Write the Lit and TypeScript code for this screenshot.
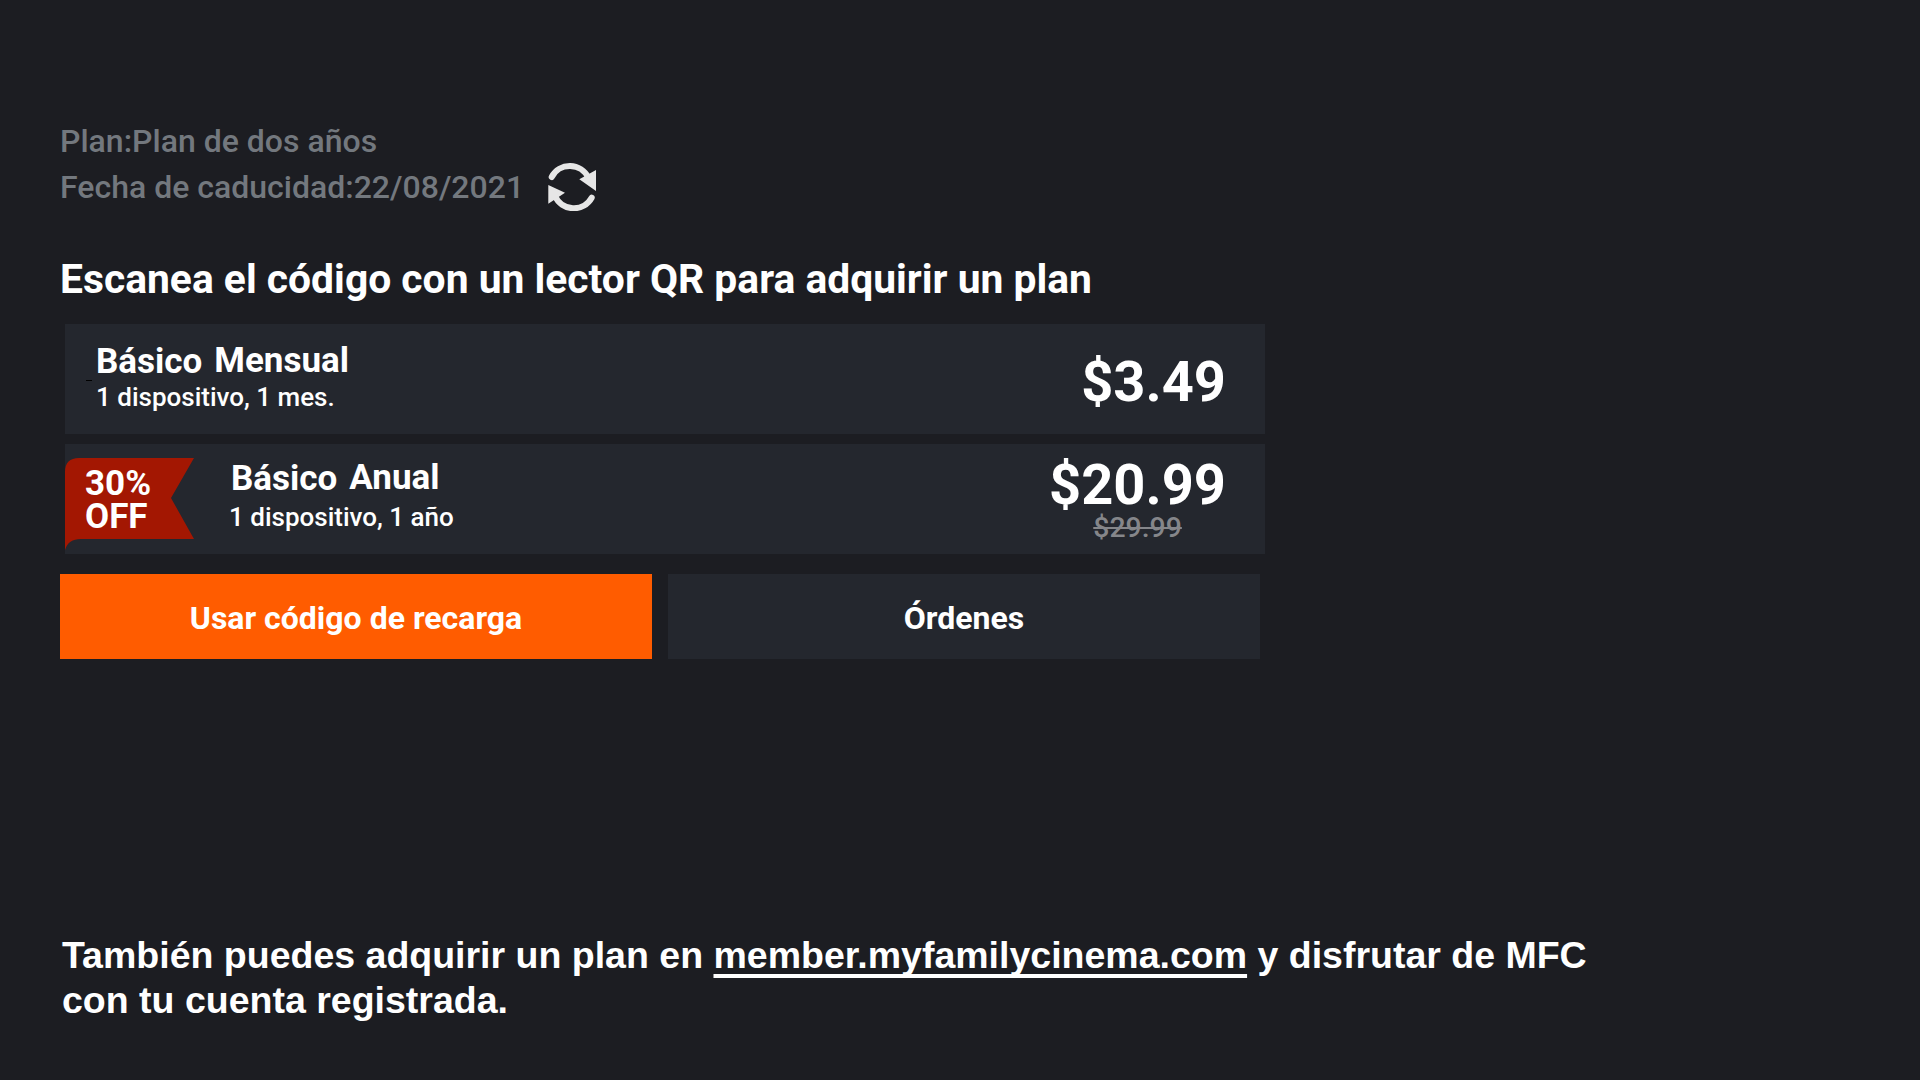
import { LitElement, html, css } from "lit";
import { customElement } from "lit/decorators.js";

@customElement("app-root")
export class AppRoot extends LitElement {
  static styles = css`
    :host { display: flex; flex-direction: column; width: 1920px; height: 1080px; background: #1c1d22; font-family: Roboto, sans-serif; color: #fff; overflow: hidden; box-sizing: border-box; padding: 118px 0 0 60px; }
    .meta { font-size: 32px; font-weight: 500; color: #73787e; line-height: 46px; }
    .expiry { display: flex; align-items: center; height: 46px; }
    .expiry svg { margin: 0 0 3px 23px; display: block; flex: none; }
    h1 { margin: 41px 0 0; font-size: 40.8px; font-weight: 700; line-height: 56px; }
    .rows { display: flex; flex-direction: column; gap: 10px; margin: 17px 0 0 5px; width: 1200px; }
    .row { position: relative; height: 110px; background: #24272e; display: flex; align-items: center; justify-content: space-between; padding: 0 39px 0 31px; box-sizing: border-box; }
    .row.deal { padding-left: 166px; }
    .info { display: flex; flex-direction: column; margin-bottom: 5px; }
    .deal .info { margin-bottom: 8px; }
    .name { display: flex; gap: 12px; font-size: 35px; font-weight: 700; line-height: 42px; margin-bottom: -1px; }
    .deal .name { margin-bottom: 2px; }
    .name .b { position: relative; top: 1px; }
    .sub { font-size: 26px; font-weight: 500; line-height: 32px; }
    .deal .sub { margin-left: -2px; }
    .price { display: flex; flex-direction: column; align-items: center; margin-top: 5px; }
    .deal .price { margin: 0 0 9px; }
    .now { font-size: 56px; font-weight: 700; line-height: 66px; }
    .was { font-size: 28.4px; font-weight: 500; line-height: 20px; color: #85868a; text-decoration: line-through; height: 20px; }
    .ribbon { position: absolute; left: 0; top: 14px; width: 130px; height: 92px; display: block; }
    .off { position: absolute; left: 20px; top: 23px; font-size: 35px; font-weight: 700; line-height: 33px; }
    .dash { position: absolute; left: 21px; top: 56px; width: 6px; height: 1px; background: #000; }
    .actions { display: flex; gap: 16px; margin-top: 20px; }
    button { width: 592px; height: 85px; border: 0; padding: 2px 0 0; background: #24272e; color: #fff; font: 700 32px Roboto, sans-serif; }
    button.primary { background: #ff5c00; }
    .foot { margin: 274px 0 0 2px; width: 1560px; font: 700 37.5px/45px "Liberation Sans", sans-serif; }
    .foot a { color: #fff; text-decoration: underline; text-decoration-thickness: 4px; text-underline-offset: 6px; text-decoration-skip-ink: none; }
  `;

  render() {
    return html`
      <div class="meta">Plan:Plan de dos años</div>
      <div class="meta expiry">Fecha de caducidad:22/08/2021
        <svg width="50" height="50" viewBox="0 0 50 50" fill="none">
          <path d="M4.7 16A20.5 20.5 0 0 1 41.3 16.7M44.7 36.7A20.5 20.5 0 0 1 8 35" stroke="#e6e6e6" stroke-width="6" stroke-linecap="round"/>
          <path d="M49 9V30L32.3 18.3ZM1.3 24V42.7L18 31.7Z" fill="#e6e6e6"/>
        </svg>
      </div>
      <h1>Escanea el código con un lector QR para adquirir un plan</h1>
      <div class="rows">
        <div class="row">
          <span class="dash"></span>
          <div class="info">
            <div class="name"><span class="b">Básico</span><span class="p">Mensual</span></div>
            <div class="sub">1 dispositivo, 1 mes.</div>
          </div>
          <div class="price"><span class="now">$3.49</span></div>
        </div>
        <div class="row deal">
          <svg class="ribbon" viewBox="0 0 130 92">
            <path d="M0 14Q0 0 14 0H129L106 40L129 81H16Q3 81 0 92Z" fill="#a31702"/>
          </svg>
          <div class="off">30%<br />OFF</div>
          <div class="info">
            <div class="name"><span class="b">Básico</span><span class="p">Anual</span></div>
            <div class="sub">1 dispositivo, 1 año</div>
          </div>
          <div class="price"><span class="now">$20.99</span><span class="was">$29.99</span></div>
        </div>
      </div>
      <div class="actions">
        <button class="primary">Usar código de recarga</button>
        <button>Órdenes</button>
      </div>
      <div class="foot">También puedes adquirir un plan en <a>member.myfamilycinema.com</a> y disfrutar de MFC con tu cuenta registrada.</div>
    `;
  }
}
